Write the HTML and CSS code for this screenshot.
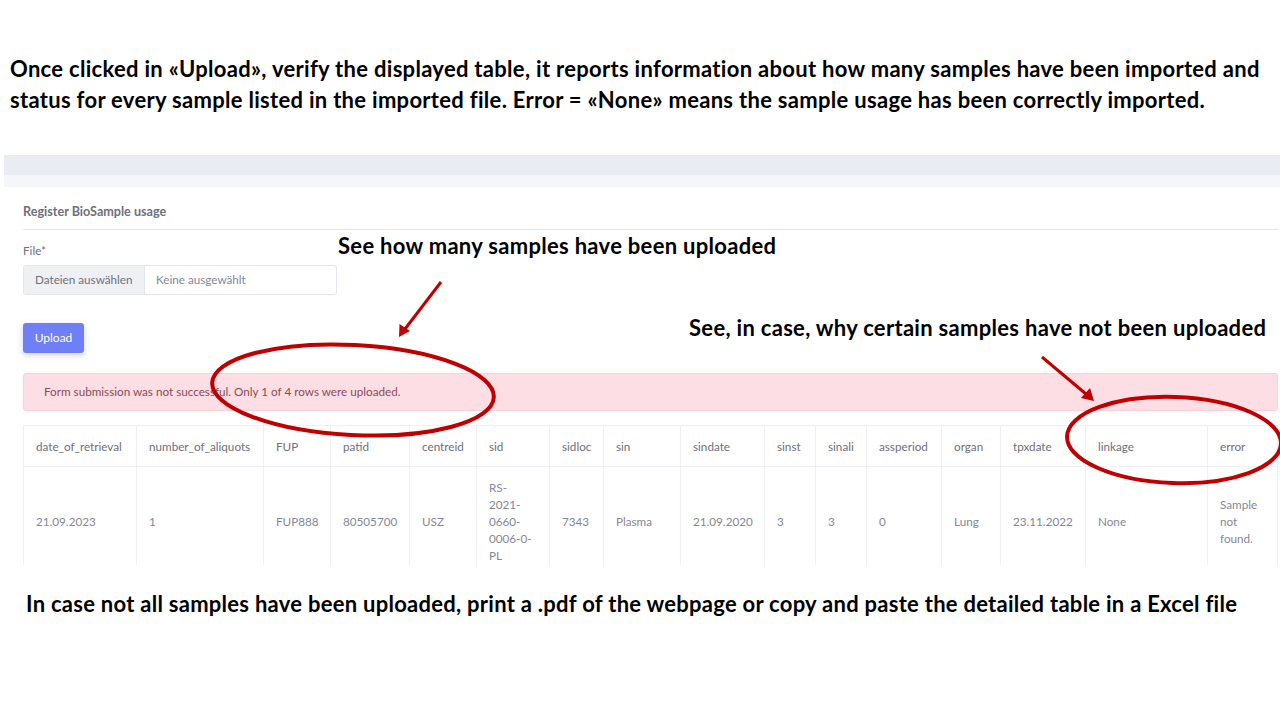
FILE: index.html
```html
<!DOCTYPE html>
<html lang="en">
<head>
<meta charset="utf-8">
<title>Register BioSample usage – upload result</title>
<link rel="stylesheet" href="styles.css">
</head>
<body>
<div class="slide">
  <p class="caption caption-top">Once clicked in «Upload», verify the displayed table, it reports information about how many samples have been imported and<br>status for every sample listed in the imported file. Error = «None» means the sample usage has been correctly imported.</p>

  <div class="shot">
    <div class="shot-topbar"></div>
    <div class="shot-page">
      <div class="card">
        <div class="card-header">Register BioSample usage</div>
        <div class="card-body">
          <div class="field-label">File*</div>
          <div class="file-input">
            <span class="file-btn">Dateien auswählen</span>
            <span class="file-name">Keine ausgewählt</span>
          </div>
          <button class="btn-upload" type="button">Upload</button>
          <div class="alert">Form submission was not successful. Only 1 of 4 rows were uploaded.</div>
          <table class="results">
            <colgroup>
              <col><col><col><col><col><col><col><col><col><col><col><col><col><col><col><col>
            </colgroup>
            <thead>
              <tr>
                <th>date_of_retrieval</th><th>number_of_aliquots</th><th>FUP</th><th>patid</th><th>centreid</th><th>sid</th><th>sidloc</th><th>sin</th><th>sindate</th><th>sinst</th><th>sinali</th><th>assperiod</th><th>organ</th><th>tpxdate</th><th>linkage</th><th>error</th>
              </tr>
            </thead>
            <tbody>
              <tr>
                <td>21.09.2023</td><td>1</td><td>FUP888</td><td>80505700</td><td>USZ</td><td class="cell-narrow">RS-2021-0660-0006-0-PL</td><td>7343</td><td>Plasma</td><td>21.09.2020</td><td>3</td><td>3</td><td>0</td><td>Lung</td><td>23.11.2022</td><td>None</td><td>Sample not found.</td>
              </tr>
            </tbody>
          </table>
        </div>
      </div>
    </div>
  </div>

  <p class="caption caption-bottom">In case not all samples have been uploaded, print a .pdf of the webpage or copy and paste the detailed table in a Excel file</p>

  <p class="note note-count">See how many samples have been uploaded</p>
  <p class="note note-why">See, in case, why certain samples have not been uploaded</p>

  <svg class="marks" width="1280" height="720" viewBox="0 0 1280 720" aria-hidden="true">
    <line x1="441" y1="282" x2="405" y2="329" class="mark-line"/>
    <polygon points="399,337 399.5,324 410,331" class="mark-head"/>
    <line x1="1042" y1="357" x2="1086" y2="394" class="mark-line"/>
    <polygon points="1094,401 1081,398 1090,388" class="mark-head"/>
    <ellipse cx="353" cy="390" rx="141" ry="45" transform="rotate(3 353 390)" class="mark-ring"/>
    <ellipse cx="1174" cy="440" rx="107" ry="43" transform="rotate(2 1174 440)" class="mark-ring"/>
  </svg>
</div>
</body>
</html>
```

FILE: styles.css
```css
html, body {
  margin: 0;
  padding: 0;
  background: #ffffff;
}

.slide {
  position: relative;
  width: 1280px;
  height: 720px;
  overflow: hidden;
  background: #ffffff;
  font-family: Lato, "Open Sans", sans-serif;
}

.caption {
  margin: 0;
  font-family: Lato, "Liberation Sans", sans-serif;
  font-weight: 700;
  color: #000000;
  font-size: 22px;
  line-height: 31px;
  letter-spacing: 0.3px;
  white-space: nowrap;
}

.caption-top {
  padding: 53px 0 0 10px;
}

.caption-bottom {
  padding: 23px 0 0 26px;
  letter-spacing: 0.27px;
}

/* embedded screenshot */
.shot {
  margin: 40px 0 0 4px;
  height: 410px;
  overflow: hidden;
  background: #f4f6f9;
  font-family: Lato, "Open Sans", sans-serif;
  font-size: 11.7px;
  line-height: 16.8px;
  color: #858796;
}

.shot-topbar {
  height: 20px;
  background: #e9edf3;
}

.shot-page {
  padding-top: 12px;
}

.card {
  background: #ffffff;
  padding: 0 2px 0 19px;
}

.card-header {
  padding: 17px 0 8px;
  border-bottom: 1px solid #e3e6f0;
  font-weight: 700;
  font-size: 12.6px;
  color: #6e707e;
}

.card-body {
  display: flex;
  flex-direction: column;
  align-items: flex-start;
}

.field-label {
  margin-top: 12px;
  color: #6e707e;
}

.file-input {
  display: flex;
  margin-top: 6px;
  width: 314px;
  height: 30px;
  box-sizing: border-box;
  border: 1px solid #e3e6ee;
  border-radius: 3px;
  overflow: hidden;
}

.file-btn {
  display: flex;
  align-items: center;
  width: 121px;
  box-sizing: border-box;
  padding-left: 11px;
  background: #eef0f4;
  border-right: 1px solid #e3e6ee;
  color: #6e707e;
}

.file-name {
  display: flex;
  align-items: center;
  padding-left: 11px;
  color: #858796;
}

.btn-upload {
  margin-top: 28px;
  width: 61px;
  height: 30px;
  border: 0;
  border-radius: 3px;
  background: #6f7ff5;
  color: #ffffff;
  font-family: inherit;
  font-size: 12px;
  box-shadow: 0 2px 6px rgba(111, 127, 245, 0.35);
}

.alert {
  align-self: stretch;
  margin-top: 20px;
  height: 38px;
  box-sizing: border-box;
  display: flex;
  align-items: center;
  padding-left: 20px;
  background: #fddee4;
  border: 1px solid #fad0d8;
  border-radius: 3px;
  color: #8a4c56;
}

.results {
  margin-top: 14px;
  width: 1254px;
  table-layout: fixed;
  border-collapse: collapse;
}

.results th,
.results td {
  padding: 12px;
  border: 1px solid #eef0f5;
  text-align: left;
  vertical-align: middle;
  font-weight: 400;
  color: #858796;
}

.results th {
  color: #6e707e;
}

.results .cell-narrow {
  padding-right: 15px;
}

.results col:nth-child(1)  { width: 113px; }
.results col:nth-child(2)  { width: 127px; }
.results col:nth-child(3)  { width: 67px; }
.results col:nth-child(4)  { width: 79px; }
.results col:nth-child(5)  { width: 67px; }
.results col:nth-child(6)  { width: 73px; }
.results col:nth-child(7)  { width: 54px; }
.results col:nth-child(8)  { width: 77px; }
.results col:nth-child(9)  { width: 84px; }
.results col:nth-child(10) { width: 51px; }
.results col:nth-child(11) { width: 51px; }
.results col:nth-child(12) { width: 75px; }
.results col:nth-child(13) { width: 59px; }
.results col:nth-child(14) { width: 85px; }
.results col:nth-child(15) { width: 122px; }
.results col:nth-child(16) { width: 70px; }

/* slide annotations placed over the screenshot */
.note {
  position: absolute;
  margin: 0;
  font-family: Lato, "Liberation Sans", sans-serif;
  font-weight: 700;
  font-size: 22px;
  line-height: 31px;
  letter-spacing: 0.3px;
  color: #000000;
  white-space: nowrap;
}

.note-count {
  left: 338px;
  top: 230px;
}

.note-why {
  left: 689px;
  top: 312px;
}

.marks {
  position: absolute;
  left: 0;
  top: 0;
  pointer-events: none;
}

.mark-line {
  stroke: #c00000;
  stroke-width: 3;
}

.mark-head {
  fill: #c00000;
}

.mark-ring {
  fill: none;
  stroke: #c00000;
  stroke-width: 4;
}
```
